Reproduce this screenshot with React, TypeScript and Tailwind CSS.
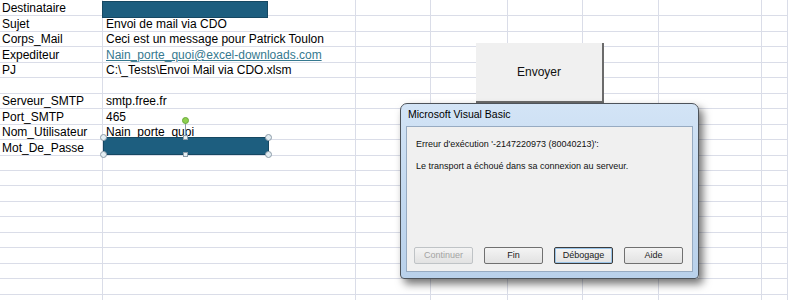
import React from 'react';

const colW = ['w-[103px]', 'w-[253px]', 'w-[75px]', 'w-[77px]', 'w-[75px]', 'w-[76px]', 'w-[103px]', 'flex-1'];
const rowH = [16, 16, 15, 16, 15, 16, 15, 16, 15, 16, 15, 15, 16, 15, 16, 15, 16, 15, 16, 15];
const H: Record<number, string> = { 15: 'h-[15px]', 16: 'h-[16px]' };

type Cell = { text: string; link?: boolean };
const cells: Record<number, [Cell?, Cell?]> = {
  0: [{ text: 'Destinataire' }],
  1: [{ text: 'Sujet' }, { text: 'Envoi de mail via CDO' }],
  2: [{ text: 'Corps_Mail' }, { text: 'Ceci est un message pour Patrick Toulon' }],
  3: [{ text: 'Expediteur' }, { text: 'Nain_porte_quoi@excel-downloads.com', link: true }],
  4: [{ text: 'PJ' }, { text: 'C:\\_Tests\\Envoi Mail via CDO.xlsm' }],
  6: [{ text: 'Serveur_SMTP' }, { text: 'smtp.free.fr' }],
  7: [{ text: 'Port_SMTP' }, { text: '465' }],
  8: [{ text: 'Nom_Utilisateur' }, { text: 'Nain_porte_quoi' }],
  9: [{ text: 'Mot_De_Passe' }],
};

function Sheet() {
  return (
    <div className="flex flex-col">
      {rowH.map((h, r) => (
        <div key={r} className={`flex ${H[h]}`}>
          {colW.map((w, c) => {
            const cell = c < 2 ? cells[r]?.[c] : undefined;
            return (
              <div
                key={c}
                className={`${w} shrink-0 border-r border-b border-[#dadde8] flex items-end overflow-visible whitespace-nowrap leading-[14px] ${c === 0 ? 'pl-[2px]' : 'pl-[3px]'}`}
              >
                {cell && (
                  <span className={cell.link ? 'text-[#35798f] underline underline-offset-1' : 'text-black'}>{cell.text}</span>
                )}
              </div>
            );
          })}
        </div>
      ))}
    </div>
  );
}

function Handle({ x, y, square }: { x: string; y: string; square?: boolean }) {
  return (
    <div
      className={`absolute ${x} ${y} ${square ? 'w-[5px] h-[5px]' : 'w-[7px] h-[7px] rounded-full'} bg-[#e4eef3] border border-[#8d9ca8]`}
    />
  );
}

function DlgButton({ label, disabled, isDefault }: { label: string; disabled?: boolean; isDefault?: boolean }) {
  return (
    <div
      className={`w-[59px] h-[17px] flex items-center justify-center rounded-[2px] bg-gradient-to-b from-[#f4f4f4] to-[#e2e2e2] text-[9px] ${
        disabled
          ? 'border border-[#bfc3c6] text-[#a3a3a3]'
          : isDefault
          ? 'border border-[#3c3c3c] text-[#1a1a1a] shadow-[inset_0_0_0_1px_#9ac4e8]'
          : 'border border-[#707070] text-[#1a1a1a]'
      }`}
    >
      {label}
    </div>
  );
}

export default function App() {
  return (
    <div className="relative w-[788px] h-[300px] overflow-hidden bg-white text-[12px] text-black" style={{ fontFamily: '"Liberation Sans", Arial, sans-serif' }}>
      <Sheet />

      {/* Destinataire shape */}
      <div className="absolute left-[102px] top-[1px] w-[166px] h-[17px] bg-[#1d5e7f] border border-[#164862]" />

      {/* Mot de passe shape (selected) */}
      <div className="absolute left-[103px] top-[137px] w-[166px] h-[18px] bg-[#1d5e7f] border border-[#164862]" />
      <div className="absolute left-[185px] top-[122px] w-px h-[15px] bg-[#8d9ca8]" />
      <div className="absolute left-[182px] top-[117px] w-[7px] h-[7px] rounded-full bg-[#8ed14f] border border-[#6aa83a]" />
      <Handle x="left-[100px]" y="top-[134px]" />
      <Handle x="left-[265px]" y="top-[134px]" />
      <Handle x="left-[100px]" y="top-[151px]" />
      <Handle x="left-[265px]" y="top-[151px]" />
      <Handle x="left-[183px]" y="top-[135px]" square />
      <Handle x="left-[183px]" y="top-[152px]" square />

      {/* Envoyer button */}
      <div className="absolute left-[476px] top-[43px] w-[128px] h-[60px] bg-[#f0f0f0] border-r-2 border-b-2 border-[#6b6b6b] flex items-center justify-center text-[12px] text-[#111]">
        Envoyer
      </div>

      {/* Dialog */}
      <div className="absolute left-[400px] top-[103px] w-[299px] h-[176px] rounded-t-[7px] rounded-b-[4px] border border-[#4d535a] bg-gradient-to-b from-[#d3e4f6] via-[#c3d9f0] to-[#b9d1eb] shadow-[4px_5px_8px_rgba(0,0,0,0.55)] flex flex-col px-[5px] pb-[6px]">
        <div className="h-[22px] flex items-center pl-[2px] text-[10.5px] text-black">Microsoft Visual Basic</div>
        <div className="flex-1 bg-[#f0f0f0] border border-[#97abc2] flex flex-col text-[9px] text-[#111]">
          <p className="mt-[12px] pl-[9px] leading-[11px]">Erreur d&apos;exécution &apos;-2147220973 (80040213)&apos;:</p>
          <p className="mt-[11px] pl-[9px] leading-[11px]">Le transport a échoué dans sa connexion au serveur.</p>
          <div className="mt-auto mb-[7px] pl-[7px] flex gap-[11px]">
            <DlgButton label="Continuer" disabled />
            <DlgButton label="Fin" />
            <DlgButton label="Débogage" isDefault />
            <DlgButton label="Aide" />
          </div>
        </div>
      </div>
    </div>
  );
}
